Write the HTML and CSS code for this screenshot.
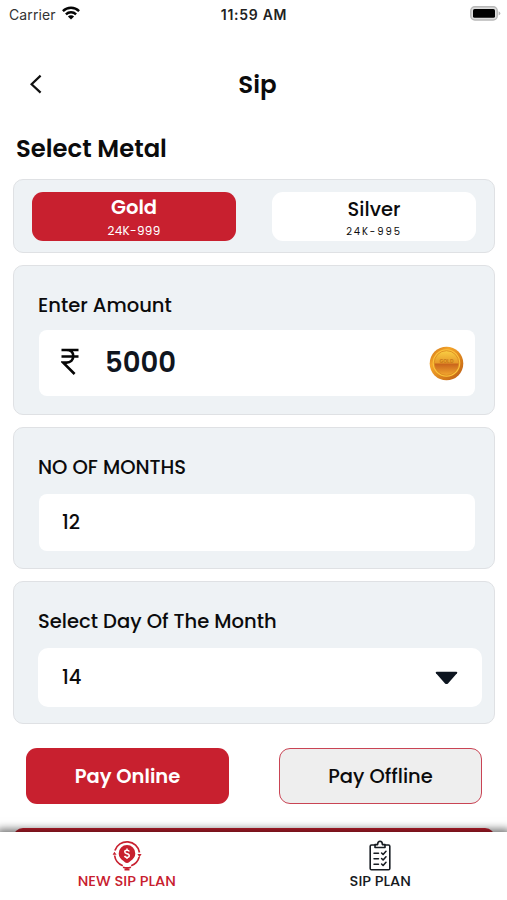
FILE: index.html
```html
<!DOCTYPE html>
<html lang="en">
<head>
<meta charset="utf-8">
<meta name="viewport" content="width=device-width, initial-scale=1">
<title>Sip</title>
<link rel="stylesheet" href="styles.css">
</head>
<body>
<div class="screen">
  <div class="status">
    <div class="carrier">
      <span>Carrier</span>
      <svg width="18" height="14" viewBox="0 0 18 14" fill="none" stroke="#050505" stroke-width="2.4"><path d="M.9 5.1a11.6 11.6 0 0 1 16.2 0M3.9 8.3a7.3 7.3 0 0 1 10.2 0"/><path d="M9 13.6 5.9 10.5a4.4 4.4 0 0 1 6.2 0z" fill="#050505" stroke="none"/></svg>
    </div>
    <span class="clock">11:59 AM</span>
    <svg class="battery" width="31" height="15" viewBox="0 0 31 15"><rect x=".8" y=".8" width="26.4" height="13.2" rx="4" fill="#ddd" stroke="#b8b8b8" stroke-width="1.5"/><rect x="3" y="3" width="22" height="8.8" rx="1.6"/><path d="M28.6 5.2q3.6 2.2 0 4.4z" fill="#b4b4b4"/></svg>
  </div>

  <header class="header">
    <svg class="back" width="14" height="20" viewBox="0 0 14 20" fill="none" stroke="#111" stroke-width="2.2"><path d="m11.6 1.6-9 8.6 9 8.4"/></svg>
    <h1 class="title">Sip</h1>
  </header>

  <main class="content">
    <h2 class="heading">Select Metal</h2>

    <section class="card metals">
      <button class="metal metal-active"><span class="metal-name">Gold</span><span class="metal-purity">24K-999</span></button>
      <button class="metal"><span class="metal-name">Silver</span><span class="metal-purity">24K-995</span></button>
    </section>

    <section class="card amount">
      <div class="label label-amount">Enter Amount</div>
      <div class="field">
        <svg class="rupee" width="18" height="28" viewBox="0 0 18 28" fill="none" stroke="#050505" stroke-width="2.6"><path d="M.5 2H17.500M.5 8.500H17.500M.5 2H5.500C10.500 2 12.300 5 12.300 8.300 12.300 12 9.500 14.600 5.500 14.600H2.200L13.600 26"/></svg>
        <span class="value-amount">5000</span>
        <svg class="coin" width="35" height="35" viewBox="0 0 35 35">
          <defs>
            <linearGradient id="rim" x1="0" y1="0" x2="1" y2="1"><stop offset="0" stop-color="#c86b14"/><stop offset=".3" stop-color="#f4a52b"/><stop offset=".7" stop-color="#d47a1a"/><stop offset="1" stop-color="#b75716"/></linearGradient>
            <linearGradient id="face" x1="0" y1="0" x2="0" y2="1"><stop offset="0" stop-color="#f9ce43"/><stop offset=".5" stop-color="#e79a2a"/><stop offset=".54" stop-color="#c9641c"/><stop offset="1" stop-color="#f3a72e"/></linearGradient>
          </defs>
          <circle cx="17.500" cy="17.500" r="16.800" fill="url(#rim)"/>
          <circle cx="17.500" cy="17" r="13.800" fill="#fbc23b"/>
          <circle cx="17.500" cy="17" r="12.300" fill="url(#face)" stroke="#d9861f" stroke-width=".8"/>
          <text class="coin-text" x="17.500" y="17.200" text-anchor="middle">GOLD</text>
        </svg>
      </div>
    </section>

    <section class="card months">
      <div class="label label-months">NO OF MONTHS</div>
      <div class="field"><span class="value">12</span></div>
    </section>

    <section class="card day">
      <div class="label label-day">Select Day Of The Month</div>
      <div class="field">
        <span class="value">14</span>
        <svg class="caret" width="23" height="14" viewBox="0 0 23 14"><path d="M1.600.7H21.400Q23 .9 22 2.300L13 12.400Q11.500 13.700 10 12.400L1 2.300Q0 .9 1.600.7Z" fill="#0d1520"/></svg>
      </div>
    </section>

    <div class="actions">
      <button class="pay pay-online"><span>Pay Online</span></button>
      <button class="pay pay-offline"><span>Pay Offline</span></button>
    </div>
    <div class="next-panel"></div>
  </main>

  <nav class="tabs">
    <a class="tab tab-active">
      <svg width="30" height="31" viewBox="0 0 30 31" fill="none" stroke="#c8202f" stroke-width="1.700">
        <path d="M2.900 10.500A12.700 12.700 0 0 1 27.500 12.500M27.200 17A12.700 12.700 0 0 1 19.200 25.700M10.800 25.700A12.700 12.700 0 0 1 2.600 15.500"/>
        <path d="M.6 14.800 2.400 11.700 4.600 14.800ZM25.400 14H29.600L27.500 17.200Z" fill="#c8202f" stroke="none"/>
        <path d="M15 5a8.300 8.300 0 0 1 8.300 8.400c0 3.600-2.200 5.500-4.500 7.300-1.300 1-2 2.300-3.800 2.300s-2.500-1.300-3.800-2.300c-2.300-1.800-4.500-3.700-4.500-7.300A8.300 8.300 0 0 1 15 5Z" fill="#c8202f" stroke="none"/>
        <path d="M11 27.300Q15 28.600 19 27.300M12.500 29.700H17.500"/>
        <path d="M17.300 11.500c-.4-.9-1.200-1.300-2.300-1.300-3 0-3 3 0 3.500s3 3.700 0 3.700c-1.300 0-2.100-.5-2.500-1.500M15 8.600v1.600M15 17.400v1.600" stroke="#fff" stroke-width="1.500"/>
      </svg>
      <span class="tab-new">NEW SIP PLAN</span>
    </a>
    <a class="tab">
      <svg width="22" height="31" viewBox="0 0 22 31" fill="none" stroke="#171c22" stroke-width="1.600" stroke-linecap="round" stroke-linejoin="round">
        <path d="M6 5H2.500Q1.200 5 1.200 6.300V28.500Q1.200 29.800 2.500 29.800H19.500Q20.800 29.800 20.800 28.500V6.300Q20.800 5 19.500 5H16"/>
        <path d="M6 7.500V4.600H8.600C8.600.2 13.400.2 13.400 4.600H16V7.500Z"/>
        <path d="M5 13.200H9.500M5 18.700H9.500M5 24.200H9.500" stroke-width="1.500"/>
        <path d="m12.600 13 1.500 1.500 2.900-3.200M12.600 18.500l1.500 1.500 2.900-3.200M12.600 24l1.500 1.500 2.900-3.200"/>
      </svg>
      <span class="tab-plan">SIP PLAN</span>
    </a>
  </nav>
</div>
</body>
</html>
```
FILE: styles.css
```css
* { box-sizing: border-box; }
body { margin: 0; background: #fff; color: #0b0b0c; font-family: Poppins, Inter, "Liberation Sans", sans-serif; }
h1, h2 { margin: 0; font-weight: 600; }
button { font: inherit; color: inherit; border: 0; padding: 0; }
svg { display: block; flex: none; }
.screen { width: 507px; height: 900px; display: flex; flex-direction: column; overflow: hidden; }
.status { height: 28px; display: grid; grid-template-columns: 1fr auto 1fr; align-items: center; padding: 0 6px 0 9px; font-family: Inter, sans-serif; font-size: 14px; }
.carrier { display: flex; gap: 6px; align-items: center; color: #333; letter-spacing: .1px; }
.carrier svg { margin-top: -3px; }
.clock { font-weight: 600; letter-spacing: .7px; color: #222; margin-left: -2px; }
.battery { justify-self: end; margin-top: -2px; }
.header { height: 112px; display: grid; grid-template-columns: 1fr auto 1fr; align-items: center; padding: 0 25px 0 29px; }
.title { font-size: 24.500px; line-height: 30px; margin: 1px -2px 0 2px; }
.content { flex: 1; min-height: 0; padding: 0 12px 0 13px; margin-top: -9px; }
.heading { font-size: 24.300px; line-height: 36px; height: 48px; padding-left: 3px; }
.card { background: #eef2f5; border: 1px solid #dfe1e4; border-radius: 10px; margin-bottom: 12px; }
.metals { height: 74px; display: flex; justify-content: space-between; padding: 12px 18px; }
.metal { width: 204px; height: 49px; border-radius: 11px; background: #fff; display: flex; flex-direction: column; align-items: center; }
.metal-name { font-size: 19.500px; line-height: 24px; font-weight: 500; margin-top: 6px; }
.metal-purity { font-size: 10px; line-height: 14px; letter-spacing: 1.9px; margin-top: 3px; }
.metal-active { background: #c8202f; color: #fff; }
.metal-active .metal-name { font-weight: 600; margin-top: 4px; }
.metal-active .metal-purity { font-size: 12px; letter-spacing: .3px; margin-top: 4px; }
.label { font-size: 19.550px; line-height: 28px; font-weight: 500; white-space: nowrap; }
.field { display: flex; align-items: center; background: #fff; border-radius: 8px; }
.amount { height: 150px; padding: 25px 19px 0 25px; }
.amount .label, .months .label { margin-left: -1px; }
.amount .field { height: 66px; margin-top: 11px; padding: 0 11px 0 22px; }
.rupee { margin-top: -2px; }
.value-amount { margin-left: 26px; font-size: 27.500px; font-weight: 600; line-height: 36px; color: #10151e; }
.coin { margin-left: auto; }
.coin-text { font: 700 5px Inter, sans-serif; fill: #c87a18; }
.months { height: 142px; padding: 25px 19px 0 25px; }
.months .field { height: 57px; margin-top: 13px; padding-left: 23px; }
.value { font-size: 19.500px; line-height: 28px; font-weight: 500; }
.day { height: 143px; padding: 25px 12px 0 24px; }
.day .field { height: 59px; margin-top: 13px; padding: 0 24px; border-radius: 10px; }
.caret { margin-left: auto; }
.actions { display: flex; justify-content: space-between; padding: 12px 13px 0; }
.pay { width: 203px; height: 56px; border-radius: 11px; font-size: 19.500px; font-weight: 500; }
.pay-online { background: #c8202f; color: #fff; font-weight: 600; }
.pay-offline { background: #eee; border: 1.500px solid #c94454; }
.next-panel { height: 50px; margin-top: 24px; border-radius: 10px; background: #c8202f; }
.tabs { position: relative; flex: none; height: 68px; background: #fff; box-shadow: 0 0 8px 3px rgba(0, 0, 0, .55); display: grid; grid-template-columns: 1fr 1fr; }
.tab { display: flex; flex-direction: column; align-items: center; padding-top: 8px; font-size: 14.700px; font-weight: 500; line-height: 20px; color: #171a1e; }
.tab-active { color: #c8202f; }
```
